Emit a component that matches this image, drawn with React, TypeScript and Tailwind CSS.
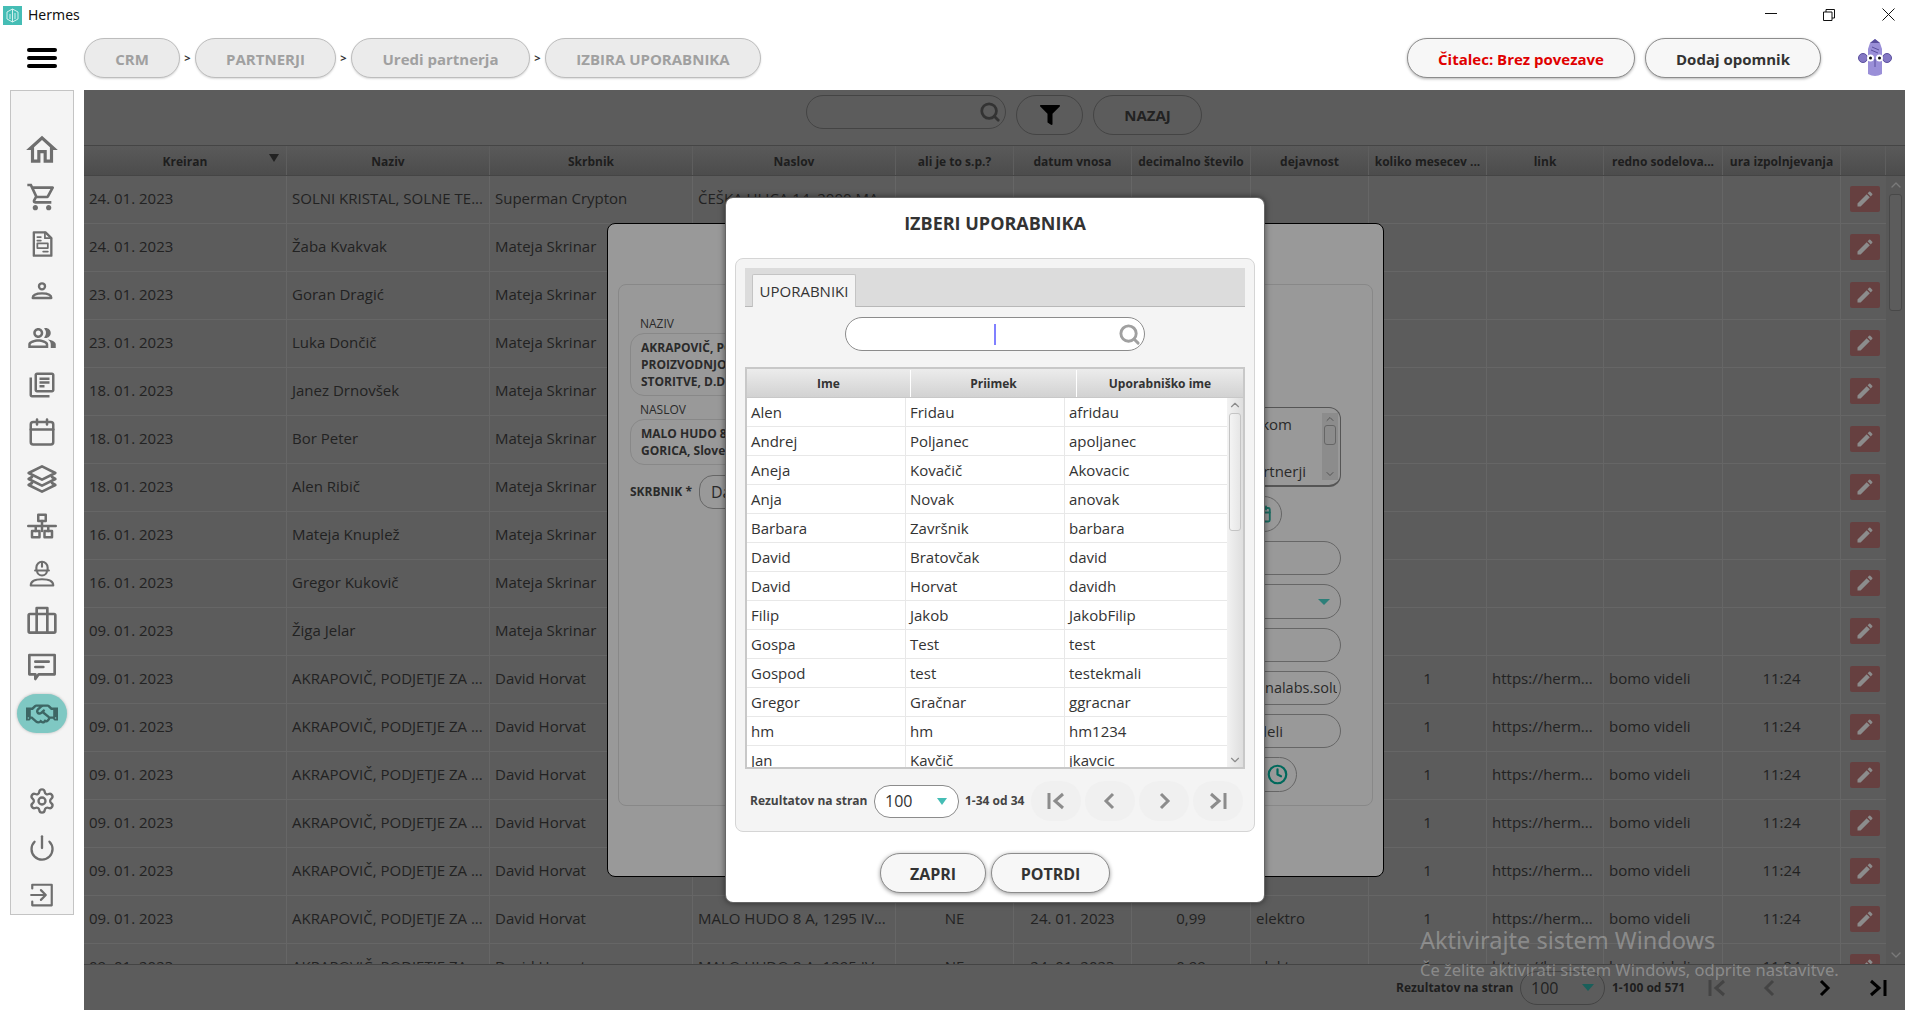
// Hermes CRM: partner list with the "select user" dialog open
import { Calendar, Clock, Settings, Power, ChevronUp, ChevronDown, Search } from "lucide-react"
import {
  MdOutlineHome,
  MdOutlineShoppingCart,
  MdOutlinePeopleAlt,
  MdOutlineLibraryBooks,
  MdEdit,
} from "react-icons/md"
import { FaRegHandshake, FaFilter } from "react-icons/fa"

const FONT = "font-['Open_Sans','Noto_Sans',sans-serif]"
const COLS =
  "grid grid-cols-[203px_203px_203px_203px_118px_118px_119px_118px_118px_117px_119px_118px_45px]"

const HEADERS = [
  "Kreiran",
  "Naziv",
  "Skrbnik",
  "Naslov",
  "ali je to s.p.?",
  "datum vnosa",
  "decimalno število",
  "dejavnost",
  "koliko mesecev ...",
  "link",
  "redno sodelova...",
  "ura izpolnjevanja",
]

const AKRA = "AKRAPOVIČ, PODJETJE ZA ..."
const PARTNERS: [string, string, string][] = [
  ["24. 01. 2023", "SOLNI KRISTAL, SOLNE TE...", "Superman Crypton"],
  ["24. 01. 2023", "Žaba Kvakvak", "Mateja Skrinar"],
  ["23. 01. 2023", "Goran Dragić", "Mateja Skrinar"],
  ["23. 01. 2023", "Luka Dončič", "Mateja Skrinar"],
  ["18. 01. 2023", "Janez Drnovšek", "Mateja Skrinar"],
  ["18. 01. 2023", "Bor Peter", "Mateja Skrinar"],
  ["18. 01. 2023", "Alen Ribič", "Mateja Skrinar"],
  ["16. 01. 2023", "Mateja Knuplež", "Mateja Skrinar"],
  ["16. 01. 2023", "Gregor Kukovič", "Mateja Skrinar"],
  ["09. 01. 2023", "Žiga Jelar", "Mateja Skrinar"],
  ["09. 01. 2023", AKRA, "David Horvat"],
  ["09. 01. 2023", AKRA, "David Horvat"],
  ["09. 01. 2023", AKRA, "David Horvat"],
  ["09. 01. 2023", AKRA, "David Horvat"],
  ["09. 01. 2023", AKRA, "David Horvat"],
  ["09. 01. 2023", AKRA, "David Horvat"],
  ["09. 01. 2023", AKRA, "David Horvat"],
]

const USERS = [
  ["Alen", "Fridau", "afridau"],
  ["Andrej", "Poljanec", "apoljanec"],
  ["Aneja", "Kovačič", "Akovacic"],
  ["Anja", "Novak", "anovak"],
  ["Barbara", "Završnik", "barbara"],
  ["David", "Bratovčak", "david"],
  ["David", "Horvat", "davidh"],
  ["Filip", "Jakob", "JakobFilip"],
  ["Gospa", "Test", "test"],
  ["Gospod", "test", "testekmali"],
  ["Gregor", "Gračnar", "ggracnar"],
  ["hm", "hm", "hm1234"],
  ["Jan", "Kavčič", "jkavcic"],
]

// ── Sidebar drawings ─────────────────────────────────────────────────────────

function Svg({ children, size = 28 }: { children: React.ReactNode; size?: number }) {
  return (
    <svg
      width={size}
      height={size}
      viewBox="0 0 24 24"
      fill="none"
      stroke="currentColor"
      strokeWidth="2"
      strokeLinejoin="round"
      strokeLinecap="round"
    >
      {children}
    </svg>
  )
}

const DocIcon = () => (
  <Svg>
    <path d="M5 2h10l5 5v15H5z" />
    <path d="M8 6h3M8 9h3M8 11.5h9v4H8zM13 18.5h4M14.5 2v5H20" strokeWidth="1.5" />
  </Svg>
)
const PersonIcon = () => (
  <Svg>
    <circle cx="12" cy="8" r="2.6" />
    <path d="M4 18c0-3 4-4 8-4s8 1 8 4z" />
  </Svg>
)
const LayersIcon = () => (
  <Svg size={32}>
    <path d="M12 2.5 22 7.5 12 12.5 2 7.5z" />
    <path d="M4.5 10.5 2 12l10 5 10-5-2.500-1.500" />
    <path d="M4.500 15 2 16.500l10 5 10-5-2.500-1.500" />
  </Svg>
)
const NetworkIcon = () => (
  <Svg size={30}>
    <rect x="9" y="3" width="6" height="5" />
    <rect x="4" y="16" width="6" height="5" />
    <rect x="14" y="16" width="6" height="5" />
    <path d="M1 12h22M12 8v8M7 12v4M17 12v4" />
  </Svg>
)
const WorkerIcon = () => (
  <Svg size={30}>
    <path d="M7.500 10V7.500a4.500 4.500 0 0 1 9 0V10zM6.500 10h11M12 3v4M8 10a4 4 0 0 0 8 0" strokeWidth="1.700" />
    <path d="M3 22c0-3.500 4-5 9-5s9 1.500 9 5z" strokeWidth="1.700" />
  </Svg>
)
const CaseIcon = () => (
  <Svg size={32}>
    <rect x="2" y="7.500" width="20" height="14" rx="1" />
    <path d="M8 7.500V3h8v4.500M8 7.500v14M16 7.500v14" />
  </Svg>
)
const ChatIcon = () => (
  <Svg size={32}>
    <path d="M2.500 3h19v14.500h-12L7 21v-3.500H2.500z" />
    <path d="M7 8h10M7 12h6" />
  </Svg>
)
const ExitIcon = () => (
  <Svg size={26}>
    <path d="M3 6V2.500h18v19H3V18" />
    <path d="M2 12h13M11 7.500l4.500 4.500-4.500 4.500" />
  </Svg>
)

function NavItem({ children, active = false }: { children: React.ReactNode; active?: boolean }) {
  return (
    <div className="h-[47px] shrink-0 flex items-center justify-center">
      {active ? (
        <div className="w-[50px] h-[39px] rounded-[20px] bg-[#7fc8c3] shadow-[0_0_3px_rgba(0,0,0,0.25)] flex items-center justify-center text-[#3d6664]">
          {children}
        </div>
      ) : (
        children
      )}
    </div>
  )
}

function Sidebar() {
  return (
    <div className="ml-[10px] w-[64px] h-[825px] shrink-0 bg-[#f4f4f4] border border-[#c4c4c4] pt-[35px] flex flex-col text-[#6e6e6e]">
      <NavItem><MdOutlineHome size={38} /></NavItem>
      <NavItem><MdOutlineShoppingCart size={32} /></NavItem>
      <NavItem><DocIcon /></NavItem>
      <NavItem><PersonIcon /></NavItem>
      <NavItem><MdOutlinePeopleAlt size={30} /></NavItem>
      <NavItem><MdOutlineLibraryBooks size={30} /></NavItem>
      <NavItem><Calendar size={30} strokeWidth={2} /></NavItem>
      <NavItem><LayersIcon /></NavItem>
      <NavItem><NetworkIcon /></NavItem>
      <NavItem><WorkerIcon /></NavItem>
      <NavItem><CaseIcon /></NavItem>
      <NavItem><ChatIcon /></NavItem>
      <NavItem active><FaRegHandshake size={32} /></NavItem>
      <div className="h-[40px] shrink-0" />
      <NavItem><Settings size={28} strokeWidth={2} /></NavItem>
      <NavItem><Power size={28} strokeWidth={2} /></NavItem>
      <NavItem><ExitIcon /></NavItem>
    </div>
  )
}

// ── Top bar ──────────────────────────────────────────────────────────────────

function Crumb({ label, w }: { label: string; w: string }) {
  return (
    <div
      className={`${w} h-[40px] pt-[2px] rounded-[20px] bg-[#ebebeb] border border-[#bdbdbd] shadow-[0_1px_2px_rgba(0,0,0,0.15)] flex items-center justify-center text-[15px] font-bold text-[#a0a0a0]`}
    >
      {label}
    </div>
  )
}

const Sep = () => (
  <span className="w-[15px] text-center text-[11px] font-bold text-[#333]">&gt;</span>
)

function Mascot() {
  return (
    <svg width="34" height="38" viewBox="0 0 34 38">
      <path d="M12 4 17 0l5 4 2 6v25q-7 4-14 0V10z" fill="#9a8fd8" />
      <path d="M12 4 17 0l5 4z" fill="#5a4f9e" />
      <circle cx="5" cy="19" r="4.500" fill="#8478c4" stroke="#5a4f9e" />
      <circle cx="29" cy="19" r="4.500" fill="#8478c4" stroke="#5a4f9e" />
      <circle cx="12.500" cy="19" r="3.500" fill="#fff" />
      <circle cx="21.500" cy="19" r="3.500" fill="#fff" />
      <circle cx="12.500" cy="19" r="1.500" fill="#111" />
      <circle cx="21.500" cy="19" r="1.500" fill="#111" />
      <path d="M17 20v8M13 11l7 3M14 8l7 3" stroke="#5a4f9e" fill="none" />
    </svg>
  )
}

function TopBar() {
  return (
    <>
      <div className="h-[30px] flex items-center relative">
        <div className="ml-[3px] w-[19px] h-[19px] bg-[#45bdb5] flex items-center justify-center">
          <svg width="13" height="15" viewBox="0 0 13 15" fill="none" stroke="#d6f2ef" strokeWidth="1">
            <path d="M6.500 1 12 4v7l-5.500 3L1 11V4zM6.500 1v13M4 6v5M9 5v6" />
          </svg>
        </div>
        <span className="ml-[6px] pb-[2px] text-[14px] text-[#111] font-['Noto_Sans',sans-serif]">Hermes</span>
        <div className="absolute left-[1765px] top-[13px] w-[12px] h-px bg-[#111]" />
        <svg className="absolute left-[1823px] top-[9px]" width="12" height="12" viewBox="0 0 12 12" fill="none" stroke="#111">
          <path d="M.5 3h8.500v8.500H.5zM3 3V.5h8.500V9H9" />
        </svg>
        <svg className="absolute left-[1882px] top-[8px]" width="13" height="13" viewBox="0 0 13 13" stroke="#111">
          <path d="M.5.5l12 12M12.500.5l-12 12" />
        </svg>
      </div>
      <div className="h-[60px] flex items-center pb-[4px]">
        <div className="ml-[27px] w-[30px] flex flex-col gap-[4px]">
          <div className="h-[4px] rounded-full bg-black" />
          <div className="h-[4px] rounded-full bg-black" />
          <div className="h-[4px] rounded-full bg-black" />
        </div>
        <div className="ml-[27px] flex items-center">
          <Crumb label="CRM" w="w-[96px]" />
          <Sep />
          <Crumb label="PARTNERJI" w="w-[141px]" />
          <Sep />
          <Crumb label="Uredi partnerja" w="w-[179px]" />
          <Sep />
          <Crumb label="IZBIRA UPORABNIKA" w="w-[216px]" />
        </div>
        <div className="ml-auto flex items-center">
          <div className="w-[228px] h-[40px] pt-[2px] rounded-[20px] bg-[#f7f7f7] border border-[#8c8c8c] shadow-[0_1px_3px_rgba(0,0,0,0.3)] flex items-center justify-center text-[15px] font-bold text-[#e00000]">
            Čitalec: Brez povezave
          </div>
          <div className="ml-[10px] w-[176px] h-[40px] pt-[2px] rounded-[20px] bg-[#f7f7f7] border border-[#8c8c8c] shadow-[0_1px_3px_rgba(0,0,0,0.3)] flex items-center justify-center text-[15px] font-bold text-[#333]">
            Dodaj opomnik
          </div>
          <div className="ml-[37px] mr-[24px]">
            <Mascot />
          </div>
        </div>
      </div>
    </>
  )
}

// ── Partner table (dimmed behind the dialogs) ────────────────────────────────

function PagerIcon({ kind, className }: { kind: "first" | "prev" | "next" | "last"; className: string }) {
  const d = {
    first: "M3 2v16M17 3l-8 7 8 7",
    prev: "M13 3l-7 7 7 7",
    next: "M7 3l7 7-7 7",
    last: "M17 2v16M3 3l8 7-8 7",
  }[kind]
  return (
    <svg className={className} width="20" height="20" viewBox="0 0 20 20" fill="none" stroke="currentColor" strokeWidth="3">
      <path d={d} />
    </svg>
  )
}

function PartnerRow({ row, index }: { row: [string, string, string]; index: number }) {
  const full = index >= 10
  const cell = "flex items-center pb-[2px] border-r border-[#666666] overflow-hidden whitespace-nowrap"
  return (
    <div className={`${COLS} h-[48px] shrink-0 border-b border-[#666666] text-[15px] text-[#222222]`}>
      <div className={`${cell} pl-[5px]`}>{row[0]}</div>
      <div className={`${cell} pl-[5px]`}>{row[1]}</div>
      <div className={`${cell} pl-[5px]`}>{row[2]}</div>
      <div className={`${cell} pl-[5px]`}>
        {index === 0 ? "ČEŠKA ULICA 14, 2000 MA..." : full ? "MALO HUDO 8 A, 1295 IV..." : ""}
      </div>
      <div className={`${cell} justify-center`}>{full ? "NE" : ""}</div>
      <div className={`${cell} justify-center`}>{full ? "24. 01. 2023" : ""}</div>
      <div className={`${cell} justify-center`}>{full ? "0,99" : ""}</div>
      <div className={`${cell} pl-[5px]`}>{full ? "elektro" : ""}</div>
      <div className={`${cell} justify-center`}>{full ? "1" : ""}</div>
      <div className={`${cell} pl-[5px]`}>{full ? "https://herm..." : ""}</div>
      <div className={`${cell} pl-[5px]`}>{full ? "bomo videli" : ""}</div>
      <div className={`${cell} justify-center`}>{full ? "11:24" : ""}</div>
      <div className="flex items-center justify-center pb-[2px] pl-[2px]">
        <div className="w-[30px] h-[26px] rounded-[2px] bg-[#664040] flex items-center justify-center text-[#8c8c8c]">
          <MdEdit size={20} />
        </div>
      </div>
    </div>
  )
}

function Main() {
  return (
    <div className="ml-[10px] w-[1821px] h-[920px] bg-[#5c5c5c] flex flex-col">
      {/* Toolbar */}
      <div className="h-[55px] shrink-0 flex items-start pt-[5px] pl-[722px] gap-[10px]">
        <div className="w-[200px] h-[34px] rounded-[17px] border border-[#444444] flex items-center justify-end pr-[4px]">
          <Search size={22} strokeWidth={3} className="text-[#333333]" />
        </div>
        <div className="w-[67px] h-[40px] rounded-[20px] border border-[#444444] flex items-center justify-center text-black">
          <FaFilter size={20} />
        </div>
        <div className="w-[109px] h-[40px] pt-[1px] rounded-[20px] border border-[#444444] flex items-center justify-center text-[15px] font-bold text-[#222222]">
          NAZAJ
        </div>
      </div>

      {/* Header */}
      <div className="h-[31px] shrink-0 flex bg-gradient-to-b from-[#5a5a5a] to-[#4c4c4c] border-y border-[#454545]">
        <div className={COLS}>
          {HEADERS.map((h, i) => (
            <div
              key={h}
              className="relative pt-[3px] flex items-center justify-center border-r border-[#5e5e5e] text-[12px] font-bold text-[#1e1e1e] whitespace-nowrap"
            >
              {h}
              {i === 0 && (
                <span className="absolute right-[7px] top-[8px] w-0 h-0 border-x-[5px] border-x-transparent border-t-[8px] border-t-[#222222]" />
              )}
            </div>
          ))}
          <div className="border-r border-[#5e5e5e]" />
        </div>
      </div>

      {/* Rows */}
      <div className="h-[789px] shrink-0 flex overflow-hidden border-b border-[#444444]">
        <div className="flex flex-col">
          {PARTNERS.map((row, i) => (
            <PartnerRow key={i} row={row} index={i} />
          ))}
        </div>
        <div className="w-[19px] shrink-0 bg-[#585858] flex flex-col items-center pt-[1px] text-[#7a7a7a]">
          <ChevronUp size={16} />
          <div className="w-[13px] h-[117px] mt-[1px] rounded-[3px] bg-[#5c5c5c] border border-[#484848]" />
          <div className="mt-auto mb-[1px]">
            <ChevronDown size={16} />
          </div>
        </div>
      </div>

      {/* Pagination */}
      <div className="flex-1 flex items-center whitespace-nowrap">
        <span className="ml-[1312px] w-[117px] shrink-0 text-[12px] font-bold text-[#1e1e1e]">Rezultatov na stran</span>
        <div className="ml-[7px] w-[85px] h-[34px] shrink-0 rounded-[17px] border border-[#444444] flex items-center px-[10px] text-[16px] text-[#222222]">
          100
          <span className="ml-auto w-0 h-0 border-x-[6px] border-x-transparent border-t-[7px] border-t-[#1a5f5a]" />
        </div>
        <span className="ml-[7px] w-[71px] shrink-0 text-[12px] font-bold text-[#1e1e1e]">1-100 od 571</span>
        <PagerIcon kind="first" className="ml-[24px] shrink-0 text-[#444444]" />
        <PagerIcon kind="prev" className="ml-[33px] shrink-0 text-[#444444]" />
        <PagerIcon kind="next" className="ml-[34px] shrink-0 text-black" />
        <PagerIcon kind="last" className="ml-[34px] shrink-0 text-black" />
      </div>
    </div>
  )
}

// ── Dialog behind: edit partner ──────────────────────────────────────────────

function BackField({ children, h = "h-[34px]" }: { children?: React.ReactNode; h?: string }) {
  return (
    <div className={`${h} w-[300px] shrink-0 rounded-[17px] border border-[#666666] flex items-center justify-end text-[16px] text-[#2a2a2a] overflow-hidden`}>
      {children}
    </div>
  )
}

function EditPartnerDialog() {
  return (
    <div className="absolute left-[607px] top-[223px] w-[777px] h-[654px] rounded-[8px] bg-[#999999] border border-black p-[10px] pt-[60px]">
      <div className="h-[522px] rounded-[8px] border border-[#888888] flex justify-between pl-[11px] pr-[31px]">
        <div className="pt-[31px] w-[320px] text-[#2a2a2a]">
          <div className="text-[12px] leading-[16px] pl-[10px]">NAZIV</div>
          <div className="mt-[1px] h-[63px] rounded-[14px] border border-[#888888] px-[10px] flex items-center text-[12px] leading-[17px] font-bold whitespace-nowrap">
            <div>
              AKRAPOVIČ, PODJETJE ZA
              <br />
              PROIZVODNJO IN
              <br />
              STORITVE, D.D.
            </div>
          </div>
          <div className="mt-[6px] text-[12px] leading-[16px] pl-[10px]">NASLOV</div>
          <div className="mt-[1px] h-[46px] rounded-[14px] border border-[#888888] px-[10px] flex items-center text-[12px] leading-[17px] font-bold whitespace-nowrap">
            <div>
              MALO HUDO 8 A, 1295 IVANČNA
              <br />
              GORICA, Slovenija
            </div>
          </div>
          <div className="mt-[10px] flex items-center">
            <span className="text-[12px] font-bold">SKRBNIK *</span>
            <div className="ml-[7px] flex-1 h-[34px] rounded-[14px] border border-[#666666] flex items-center pl-[11px] text-[16px]">
              David Horvat
            </div>
          </div>
        </div>
        <div className="pt-[122px] flex flex-col gap-[9px] items-end">
          <div className="w-[300px] h-[80px] rounded-[12px] border-b-2 border-r border-t border-[#555555] flex justify-end text-[15px] leading-[42px] text-[#2a2a2a]">
            <div className="text-right pr-[16px]">
              <div className="pr-[14px] -mt-[5px]">kom</div>
              <div className="mt-[5px]">rtnerji</div>
            </div>
            <div className="w-[16px] mr-[2px] my-[5px] bg-[#8c8c8c] flex flex-col items-center text-[#555555]">
              <ChevronUp size={12} />
              <div className="w-[12px] h-[20px] rounded-[3px] border border-[#666666]" />
              <div className="mt-auto"><ChevronDown size={12} /></div>
            </div>
          </div>
          <div className="w-[300px] h-[36px] flex justify-end pr-[59px]">
            <div className="w-[40px] rounded-r-[18px] border border-[#666666] flex items-center justify-end pr-[9px] text-[#1a6b60]">
              <Calendar size={18} strokeWidth={2.5} />
            </div>
          </div>
          <BackField />
          <BackField h="h-[35px]">
            <span className="mr-[10px] w-0 h-0 border-x-[6px] border-x-transparent border-t-[6px] border-t-[#2d7f79]" />
          </BackField>
          <BackField />
          <BackField>
            <div className="w-[72px] mr-[3px] overflow-hidden whitespace-nowrap text-[14.500px]">nalabs.solutions</div>
          </BackField>
          <BackField><span className="pr-[57px] text-[15px]">bomo videli</span></BackField>
          <div className="w-[300px] h-[35px] flex justify-end pr-[44px]">
            <div className="w-[60px] rounded-r-[18px] border border-[#666666] flex items-center justify-end pr-[8px] text-[#00695c]">
              <Clock size={21} strokeWidth={2.5} />
            </div>
          </div>
        </div>
      </div>
    </div>
  )
}

// ── Dialog on top: pick a user ───────────────────────────────────────────────

function PagerButton({ kind }: { kind: "first" | "prev" | "next" | "last" }) {
  return (
    <div className="w-[50px] h-[40px] rounded-[20px] bg-[#f0f0f0] flex items-center justify-center">
      <PagerIcon kind={kind} className="text-[#8c8c8c]" />
    </div>
  )
}

function PickUserDialog() {
  return (
    <div className="absolute left-[725px] top-[197px] w-[540px] h-[706px] rounded-[8px] bg-white border border-black/60 shadow-[0_0_6px_rgba(0,0,0,0.5)] flex flex-col items-center">
      <div className="h-[60px] pb-[10px] shrink-0 flex items-center text-[18px] font-bold text-[#333333]">
        IZBERI UPORABNIKA
      </div>

      <div className="w-[520px] h-[574px] shrink-0 rounded-[8px] bg-[#f4f4f4] border border-[#d5d5d5] px-[9px] pt-[9px]">
        {/* Tab strip */}
        <div className="h-[39px] bg-[#dcdcdc] border-b border-[#b8b8b8] flex items-end pl-[7px]">
          <div className="w-[104px] h-[33px] -mb-px rounded-t-[2px] bg-[#f4f4f4] border border-b-0 border-[#c4c4c4] flex items-center justify-center text-[15px] text-[#333333]">
            UPORABNIKI
          </div>
        </div>

        {/* Search */}
        <div className="mt-[10px] flex justify-center">
          <div className="relative w-[300px] h-[34px] rounded-[17px] bg-white border border-[#8c8c8c] flex items-center justify-end pr-[3px]">
            <span className="absolute left-[148px] top-[6px] w-[2px] h-[21px] bg-[#8080ff]" />
            <Search size={23} strokeWidth={3} className="text-[#a0a0a0]" />
          </div>
        </div>

        {/* Users table */}
        <div className="mt-[16px] w-[500px] h-[402px] border-[2px] border-[#c8c8c8] overflow-hidden flex flex-col">
          <div className="h-[29px] pt-[1px] shrink-0 grid grid-cols-[164px_166px_166px] bg-gradient-to-b from-[#ececec] to-[#d2d2d2] border-b border-[#c8c8c8] text-[12px] font-bold text-[#333333]">
            <div className="flex items-center justify-center border-r border-white">Ime</div>
            <div className="flex items-center justify-center border-r border-white">Priimek</div>
            <div className="flex items-center justify-center">Uporabniško ime</div>
          </div>
          <div className="flex-1 flex overflow-hidden">
            <div className="w-[480px] shrink-0 bg-white">
              {USERS.map((u, i) => (
                <div
                  key={i}
                  className="h-[29px] grid grid-cols-[159px_159px_162px] border-b border-[#e8e8e8] text-[15px] text-[#333333]"
                >
                  <div className="flex items-center pl-[4px] border-r border-[#e8e8e8]">{u[0]}</div>
                  <div className="flex items-center pl-[4px] border-r border-[#e8e8e8]">{u[1]}</div>
                  <div className="flex items-center pl-[4px]">{u[2]}</div>
                </div>
              ))}
            </div>
            <div className="flex-1 bg-gradient-to-r from-[#f2f2f2] to-[#dedede] flex flex-col items-center text-[#8c8c8c]">
              <ChevronUp size={14} />
              <div className="w-[12px] h-[118px] mt-[1px] rounded-[3px] bg-gradient-to-r from-[#f4f4f4] to-[#e6e6e6] border border-[#c4c4c4]" />
              <div className="mt-auto">
                <ChevronDown size={14} />
              </div>
            </div>
          </div>
        </div>

        {/* Pagination */}
        <div className="mt-[12px] flex items-center whitespace-nowrap">
          <span className="ml-[5px] w-[117px] shrink-0 text-[12px] font-bold text-[#444444]">Rezultatov na stran</span>
          <div className="ml-[7px] w-[85px] h-[33px] shrink-0 rounded-[16px] bg-white border border-[#8c8c8c] flex items-center pl-[10px] text-[16px] text-[#333333]">
            100
            <span className="ml-auto mr-[11px] w-0 h-0 border-x-[5px] border-x-transparent border-t-[7px] border-t-[#45bdb5]" />
          </div>
          <span className="ml-[6px] w-[60px] shrink-0 text-[12px] font-bold text-[#444444]">1-34 od 34</span>
          <div className="ml-[6px] flex gap-[4px]">
            <PagerButton kind="first" />
            <PagerButton kind="prev" />
            <PagerButton kind="next" />
            <PagerButton kind="last" />
          </div>
        </div>
      </div>

      <div className="mt-[21px] flex gap-[5px]">
        <div className="w-[106px] h-[40px] pt-[1px] rounded-[20px] bg-[#f7f7f7] border border-[#8c8c8c] shadow-[0_1px_4px_rgba(0,0,0,0.4)] flex items-center justify-center text-[16px] font-bold text-[#333333]">
          ZAPRI
        </div>
        <div className="w-[119px] h-[40px] pt-[1px] rounded-[20px] bg-[#f7f7f7] border border-[#8c8c8c] shadow-[0_1px_4px_rgba(0,0,0,0.4)] flex items-center justify-center text-[16px] font-bold text-[#333333]">
          POTRDI
        </div>
      </div>
    </div>
  )
}

export default function App() {
  return (
    <div className={`relative w-[1916px] h-[1026px] bg-white overflow-hidden ${FONT}`}>
      <TopBar />
      <div className="flex items-start">
        <Sidebar />
        <Main />
      </div>

      <EditPartnerDialog />
      <PickUserDialog />

      {/* Windows activation watermark */}
      <div className="absolute left-[1420px] top-[924px] text-[23.500px] leading-[32px] text-white/30 font-['Noto_Sans',sans-serif] whitespace-nowrap">
        Aktivirajte sistem Windows
      </div>
      <div className="absolute left-[1420px] top-[959px] text-[16.500px] leading-[22px] text-white/30 font-['Noto_Sans',sans-serif] whitespace-nowrap">
        Če želite aktivirati sistem Windows, odprite nastavitve.
      </div>
    </div>
  )
}
